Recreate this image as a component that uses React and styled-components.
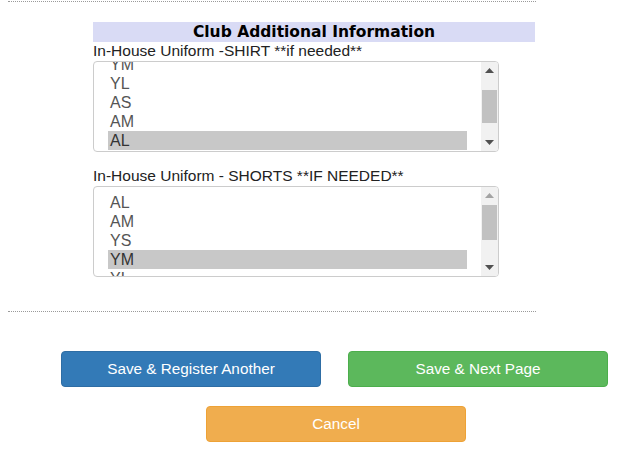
import React from 'react'
import styled, { createGlobalStyle } from 'styled-components'

const GlobalStyle = createGlobalStyle`
  html, body {
    margin: 0;
    padding: 0;
    background: #fff;
  }
  body {
    padding: 0 8px;
    font-family: "Liberation Sans", Arial, sans-serif;
    color: #222;
  }
`

const Page = styled.div`
  width: 528px;
`

const Divider = styled.div`
  border-top: 1px dotted #9a9a9a;
  margin-top: ${props => props.top || 0}px;
`

const Section = styled.div`
  padding: 20px 1px 0 85px;
`

const SectionTitle = styled.div`
  height: 20px;
  line-height: 20px;
  background-color: #d9dbf5;
  text-align: center;
  font-family: "DejaVu Sans", Verdana, sans-serif;
  font-weight: 700;
  font-size: 15.5px;
  color: #000;
`

const Label = styled.div`
  font-size: 15.5px;
  line-height: 18px;
  margin-top: ${props => props.top || 0}px;
  color: #222;
  white-space: nowrap;
`

const ListBox = styled.div`
  position: relative;
  display: flex;
  width: 406px;
  height: 91px;
  margin-top: 1px;
  box-sizing: border-box;
  border: 1px solid #ccc;
  border-radius: 4px;
  overflow: hidden;
  background: #fff;
`

const ListViewport = styled.div`
  flex: 1;
  overflow: hidden;
  padding: 0 14px;
`

const ListInner = styled.div`
  padding-top: 6px;
`

const Option = styled.div`
  height: 19px;
  line-height: 19px;
  padding: 0 2px;
  font-size: 16px;
  background: ${props => (props.selected ? '#c8c8c8' : 'transparent')};
  color: ${props => (props.selected ? '#333' : '#555')};
`

const ScrollBar = styled.div`
  width: 17px;
  display: flex;
  flex-direction: column;
  background: #f1f1f1;
`

const ScrollButton = styled.div`
  height: 17px;
  display: flex;
  align-items: center;
  justify-content: center;
`

const Track = styled.div`
  flex: 1;
  position: relative;
`

const Thumb = styled.div`
  position: absolute;
  left: 1px;
  right: 1px;
  background: #c1c1c1;
`

const Arrow = ({ dir, disabled }) => (
  <svg width='9' height='5' viewBox='0 0 9 5'>
    <path
      d={dir === 'up' ? 'M0 5 L4.5 0 L9 5 Z' : 'M0 0 L4.5 5 L9 0 Z'}
      fill={disabled ? '#a3a3a3' : '#505050'}
    />
  </svg>
)

const Buttons = styled.div`
  padding-left: 53px;
  margin-top: 39px;
  width: 547px;
`

const ButtonRow = styled.div`
  display: flex;
  justify-content: ${props => (props.center ? 'center' : 'space-between')};
  margin-top: ${props => props.top || 0}px;
  padding-left: ${props => (props.center ? 3 : 0)}px;
`

const colors = {
  primary: ['#337ab7', '#2e6da4'],
  success: ['#5cb85c', '#4cae4c'],
  warning: ['#f0ad4e', '#eea236']
}

const Button = styled.button`
  width: 260px;
  height: 36px;
  border-radius: 4px;
  border: 1px solid ${props => colors[props.variant][1]};
  background-color: ${props => colors[props.variant][0]};
  color: #fff;
  font-family: "Liberation Sans", Arial, sans-serif;
  font-size: 15.3px;
  padding: 0;
  cursor: pointer;
`

const SizeList = ({ items, selected, scroll, thumbTop, thumbHeight, upDisabled }) => (
  <ListBox>
    <ListViewport>
      <ListInner style={{ marginTop: -scroll }}>
        {items.map(item => (
          <Option key={item} selected={item === selected}>{item}</Option>
        ))}
      </ListInner>
    </ListViewport>
    <ScrollBar>
      <ScrollButton><Arrow dir='up' disabled={upDisabled} /></ScrollButton>
      <Track>
        <Thumb style={{ top: thumbTop, height: thumbHeight }} />
      </Track>
      <ScrollButton><Arrow dir='down' /></ScrollButton>
    </ScrollBar>
  </ListBox>
)

const App = () => {
  return (
    <Page>
      <GlobalStyle />
      <Divider top={1} />
      <Section>
        <SectionTitle>Club Additional Information</SectionTitle>
        <Label>In-House Uniform -SHIRT **if needed**</Label>
        <SizeList
          items={['YS', 'YM', 'YL', 'AS', 'AM', 'AL', 'AXL', 'A2XL']}
          selected='AL'
          scroll={32}
          thumbTop={11}
          thumbHeight={33}
        />
        <Label top={15}>In-House Uniform - SHORTS **IF NEEDED**</Label>
        <SizeList
          items={['AL', 'AM', 'YS', 'YM', 'YL', 'AS', 'AXL', 'A2XL']}
          selected='YM'
          scroll={0}
          thumbTop={1}
          thumbHeight={35}
          upDisabled
        />
      </Section>
      <Divider top={34} />
      <Buttons>
        <ButtonRow>
          <Button variant='primary'>Save &amp; Register Another</Button>
          <Button variant='success'>Save &amp; Next Page</Button>
        </ButtonRow>
        <ButtonRow center top={19}>
          <Button variant='warning'>Cancel</Button>
        </ButtonRow>
      </Buttons>
    </Page>
  )
}

export default App
